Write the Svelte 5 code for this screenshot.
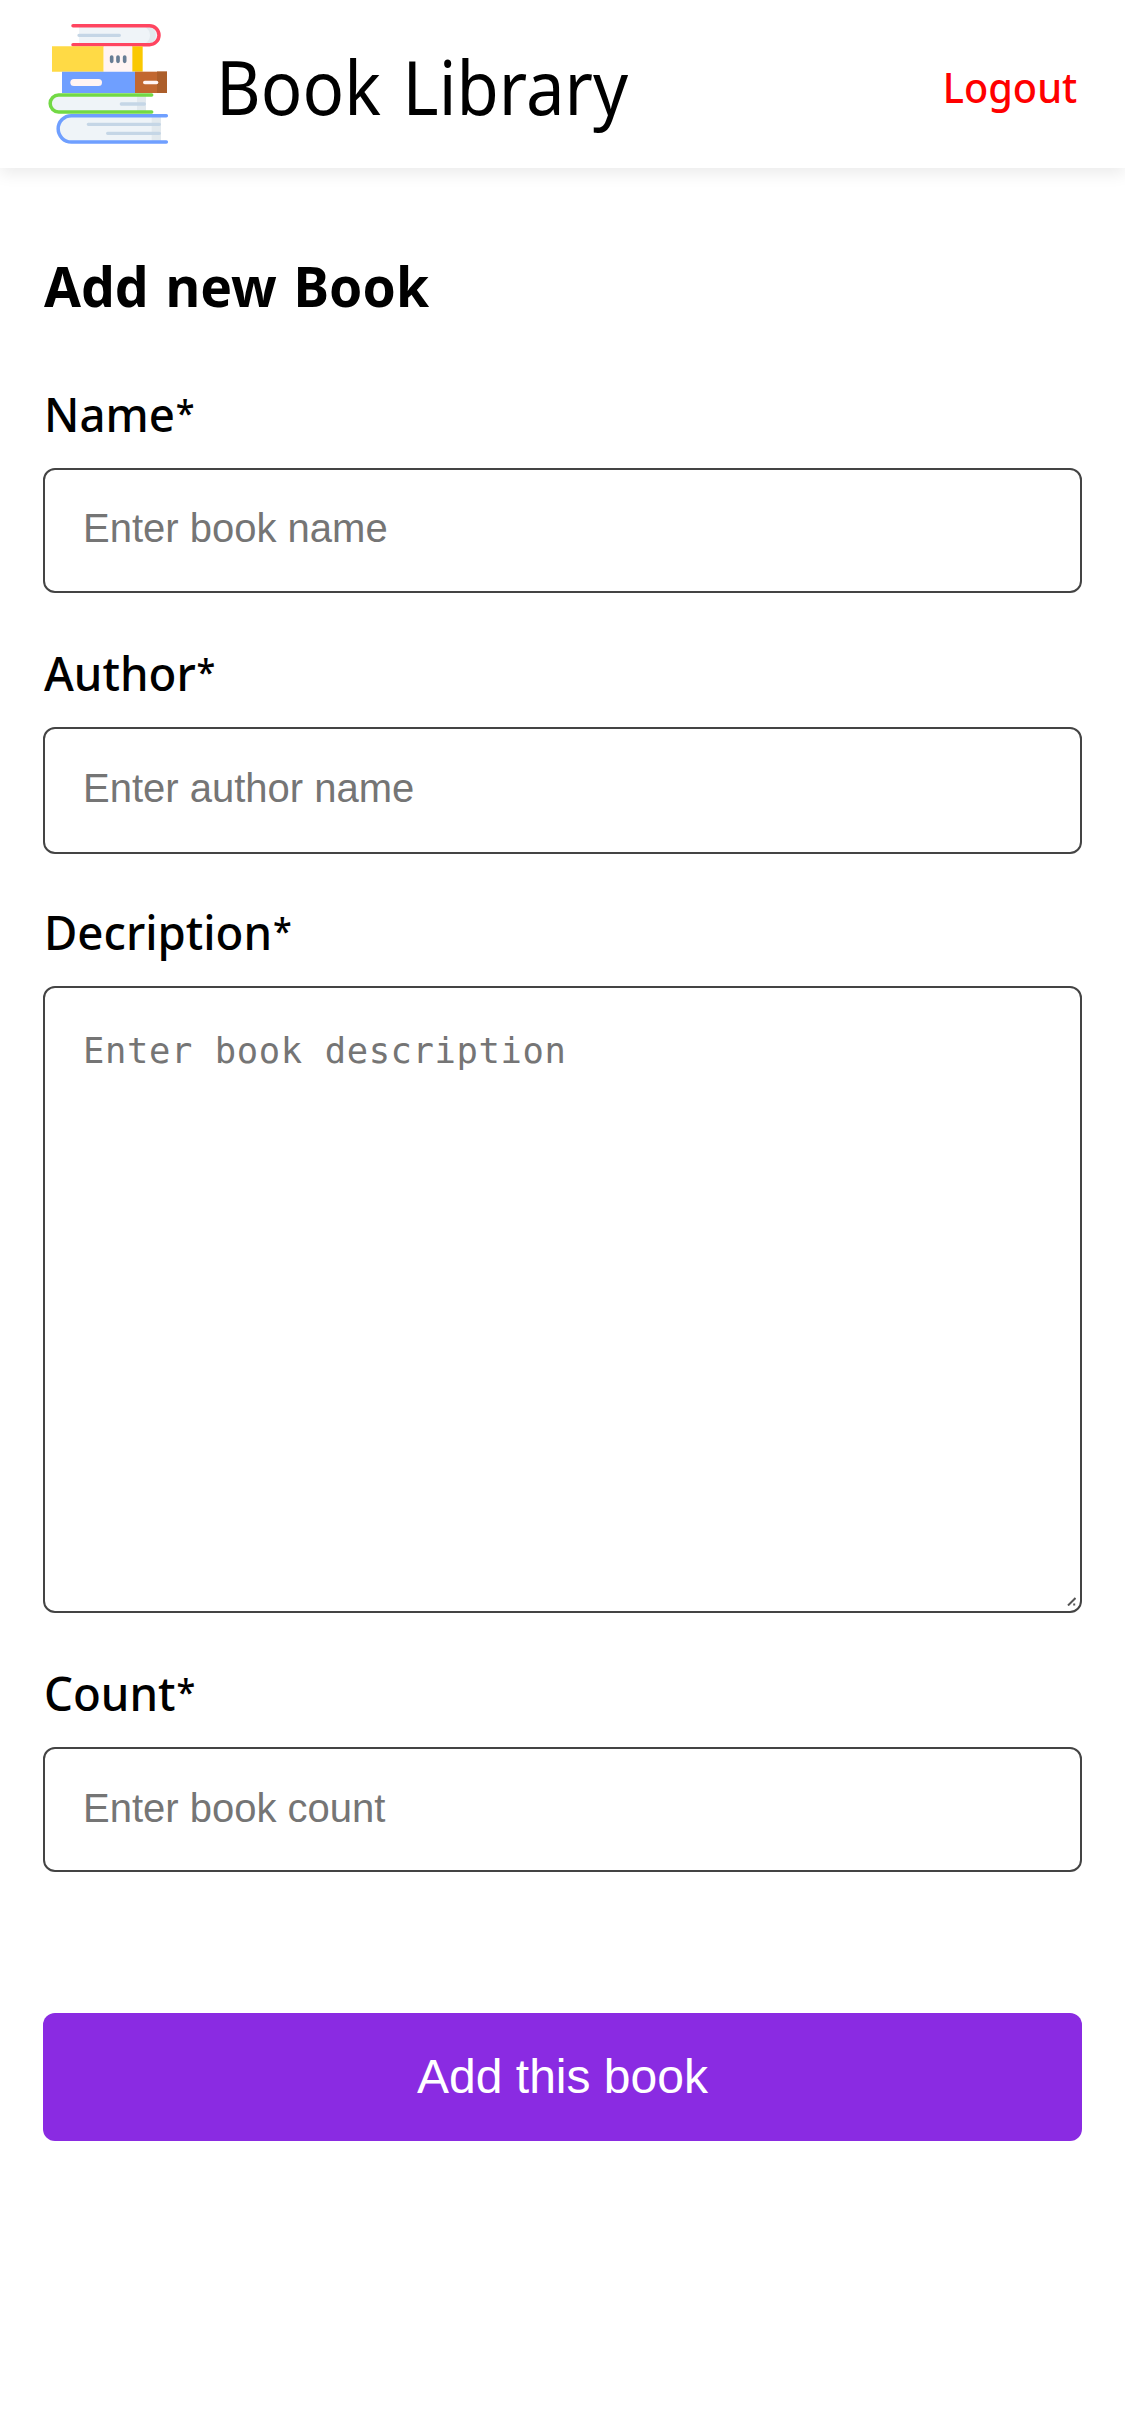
<script>
  const fields = [
    { id: 'name', label: 'Name', hint: 'Enter book name' },
    { id: 'author', label: 'Author', hint: 'Enter author name' },
    { id: 'description', label: 'Decription', hint: 'Enter book description', long: true },
    { id: 'count', label: 'Count', hint: 'Enter book count' },
  ];
</script>

<header>
  <svg class="logo" viewBox="54 42 360 360" aria-hidden="true">
    <!-- red book -->
    <path fill="#eff4f8" d="M147 47H358a28.500 28.500 0 0 1 0 57H147z" />
    <path fill="#e2e9ee" d="M344 50h14a27 27 0 0 1 0 52h-14q16-10 16-26t-16-26z" />
    <path class="rule" d="M152 76H268M147 76h8" />
    <path class="cover" stroke="#ff4560" d="M129 47H358.500a28.500 28.500 0 0 1 0 57H129" />
    <!-- yellow book -->
    <path fill="#ffda45" d="M66 109h155v76H66z" />
    <path fill="#fff4f3" d="M221 109h86v76h-86z" />
    <path fill="#fac800" d="M307 109h31v76h-31z" />
    <path stroke="#687d94" stroke-width="11" stroke-linecap="round" d="M245 141v13M264 141v13M284 141v13" />
    <!-- blue and brown book -->
    <path fill="#6f9fff" d="M96 185h219v64H96z" />
    <path fill="#c26830" d="M315 185h66v64h-66z" />
    <path fill="#ac5e2a" d="M381 184h30v65h-30z" />
    <rect x="121" y="207" width="95" height="21" rx="10.500" fill="#fff4f3" />
    <rect x="339" y="212" width="46" height="11" rx="5.500" fill="#fff4f3" />
    <!-- green book -->
    <path fill="#eff4f8" d="M348 255H86a25.500 25.500 0 0 0 0 51H348z" />
    <path fill="#e2e9ee" d="M321 255h27v51h-27z" />
    <path class="rule" d="M274 282H343" />
    <path class="cover" stroke="#72d945" d="M365 255H86a25.500 25.500 0 0 0 0 51H365" />
    <!-- light blue book -->
    <path fill="#eff4f8" d="M393 317H124a39.500 39.500 0 0 0 0 79H393z" />
    <path fill="#e2e9ee" d="M365 317h28v79h-28z" />
    <path class="rule" d="M175 343H388M233 370H388" />
    <path class="cover" stroke="#6f9fff" d="M409 317H124a39.500 39.500 0 0 0 0 79H409" />
  </svg>
  <span class="brand">Book Library</span>
  <a class="logout" href="#logout">Logout</a>
</header>

<main>
  <h1>Add new Book</h1>
  <form>
    {#each fields as field}
      <div class="field {field.id}">
        <label for={field.id}>{field.label}<span class="star">*</span></label>
        {#if field.long}
          <textarea id={field.id} placeholder={field.hint}></textarea>
          <svg class="grip" viewBox="0 0 9 9" aria-hidden="true">
            <path d="M1 8.500L8.500 1M6.200 7.500h2" />
          </svg>
        {:else}
          <input id={field.id} type="text" placeholder={field.hint} />
        {/if}
      </div>
    {/each}
    <button type="button">Add this book</button>
  </form>
</main>

<style>
  :global(body) {
    background: #fff;
    color: #000;
    font-family: 'Noto Sans', 'Open Sans', sans-serif;
  }
  header {
    display: flex;
    align-items: center;
    height: 168px;
    padding: 0 48px;
    box-sizing: border-box;
    background: #fff;
    box-shadow: 0 6px 15px rgba(0, 0, 0, 0.08);
  }
  .logo {
    width: 120px;
    height: 120px;
    flex: none;
    overflow: visible;
  }
  .rule {
    fill: none;
    stroke: #c5d6e6;
    stroke-width: 10;
    stroke-linecap: round;
  }
  .cover {
    fill: none;
    stroke-width: 10.500;
    stroke-linecap: round;
  }
  .brand {
    margin-left: 48px;
    font-size: 74px;
    line-height: 100px;
    padding-top: 6px;
    word-spacing: 4px;
    transform: scaleX(0.931);
    transform-origin: left;
  }
  .logout {
    margin-left: auto;
    color: #f00;
    font-size: 42px;
    font-weight: 500;
    line-height: 60px;
    text-decoration: none;
    padding-top: 6px;
    transform: scaleX(0.945);
    transform-origin: right;
  }
  main {
    padding: 78px 43px 0;
  }
  h1 {
    margin: 0 0 55px;
    font-size: 55px;
    line-height: 80px;
    font-weight: 700;
    word-spacing: 3px;
    transform: translateX(1px) scaleX(0.972);
    transform-origin: left;
  }
  form {
    display: flex;
    flex-direction: column;
  }
  .field {
    display: flex;
    flex-direction: column;
    gap: 23px;
    margin-bottom: 47px;
    position: relative;
  }
  .field.author {
    margin-bottom: 45px;
  }
  .field.count {
    margin-bottom: 141px;
  }
  label {
    font-size: 48px;
    height: 64px;
    line-height: 64px;
    font-weight: 500;
    transform: translate(1px, 1px) scaleX(0.95);
    transform-origin: left;
  }
  .star {
    margin-left: 1px;
    font-size: 36px;
    line-height: 0;
    vertical-align: 6px;
  }
  input,
  textarea {
    box-sizing: border-box;
    width: 100%;
    margin: 0;
    border: 2px solid #444;
    border-radius: 12px;
    background: #fff;
    outline: none;
  }
  input {
    height: 125px;
    padding: 0 38px 4px;
    font: 40px 'Liberation Sans', Arial, sans-serif;
  }
  .author input {
    height: 127px;
  }
  .count input {
    padding-bottom: 3px;
  }
  textarea {
    height: 627px;
    padding: 40px 38px;
    resize: none;
    font: 35.500px/46px 'DejaVu Sans Mono', monospace;
    letter-spacing: 0.600px;
  }
  .grip {
    position: absolute;
    right: 6px;
    bottom: 7px;
    width: 9px;
    height: 9px;
    fill: none;
    stroke: #555;
    stroke-width: 2;
  }
  ::placeholder {
    color: #757575;
    opacity: 1;
  }
  button {
    height: 128px;
    border: 0;
    border-radius: 12px;
    background: #8a2be2;
    color: #fff;
    font: 48px 'Liberation Sans', Arial, sans-serif;
    padding: 0 0 2px;
  }
</style>
